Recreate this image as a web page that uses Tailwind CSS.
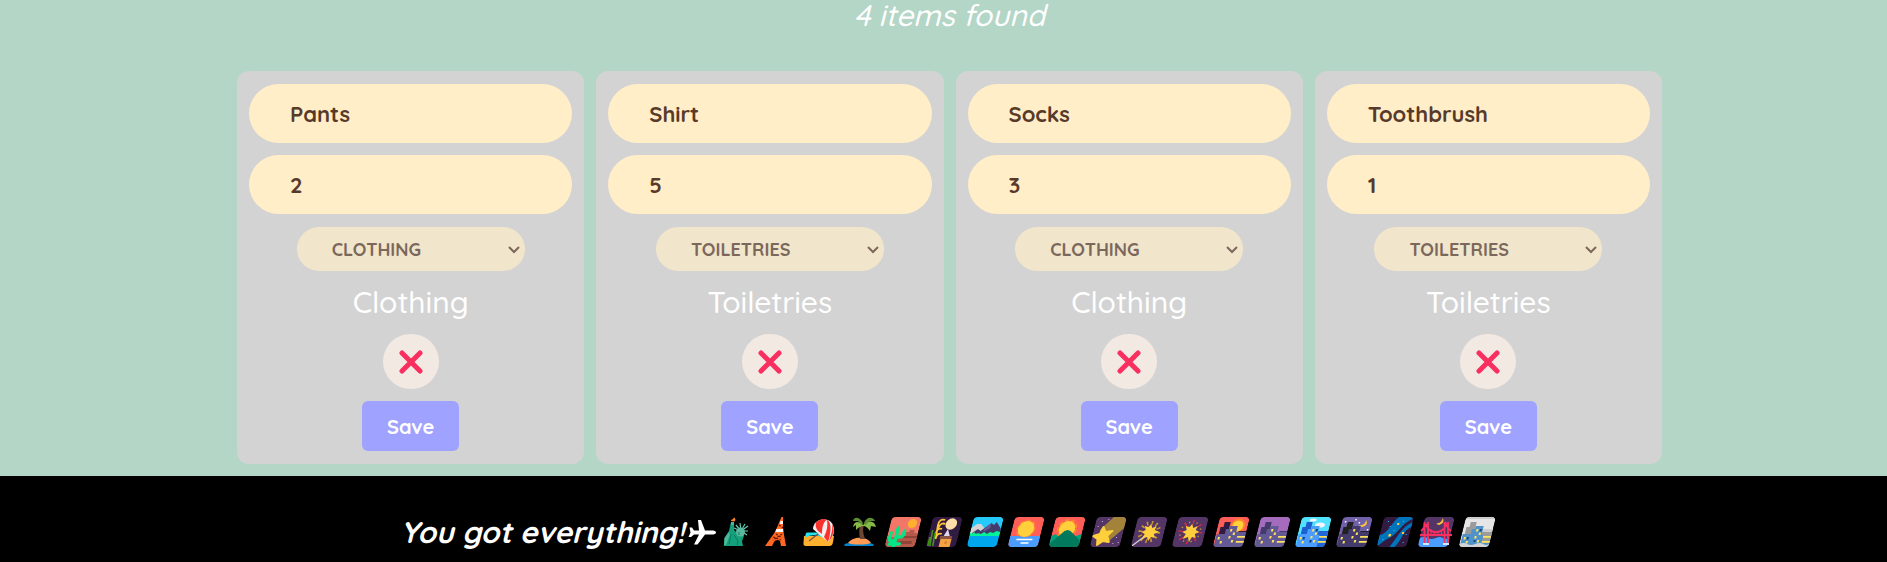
<!DOCTYPE html>
<html lang="en">
<head>
<meta charset="utf-8">
<meta name="viewport" content="width=device-width, initial-scale=1">
<title>Packing list</title>
<script src="https://cdn.jsdelivr.net/npm/@tailwindcss/browser@4"></script>
</head>
<body class="min-h-screen bg-black font-['Quicksand','Lato',sans-serif] text-white">
<!-- Shared shapes for the card buttons and the footer pictures -->
<svg class="absolute h-0 w-0" aria-hidden="true">
  <defs>
    <clipPath id="tile"><rect width="30" height="30" rx="4"/></clipPath>
    <symbol id="cross" viewBox="0 0 24 24"><path d="M3 3 21 21M21 3 3 21" fill="none" stroke="#f92f60" stroke-width="5" stroke-linecap="round"/></symbol>
    <symbol id="chevron" viewBox="0 0 12 8"><path d="m1 1 5 5 5-5" fill="none" stroke="#583a2a" stroke-width="2"/></symbol>
    <g id="towers">
      <path d="M9 30V12h3V9h8v21zM1 17h8v13H1zM20 15h10v15H20z"/>
    </g>
    <g id="windows" fill="#ffe45c">
      <path d="M13.500 12h2v2.500h-2zM17 15.500h2V18h-2zM13.500 19h2v2.500h-2zM17 23h2v2.500h-2zM3 20h2v2.500H3zM6 24h2v2.500H6zM22 19h8v1.800h-8zM22 24h8v1.800h-8z"/>
    </g>
  </defs>
</svg>

<main class="bg-[#b3d6c7] pb-3 pl-3">
  <h2 class="pb-[41px] text-center text-[30px] leading-[30px] font-medium italic">4 items found</h2>
  <ul class="mx-auto grid w-[76%] grid-cols-4 gap-3">
    <li class="flex flex-col items-center gap-3 rounded-xl bg-[#d3d3d3] px-3 py-[13px]">
      <input aria-label="Item name" value="Pants" class="h-[59px] w-full rounded-full bg-[#ffeec8] px-[41px] pt-px text-[22px] font-bold text-[#583a2a]">
      <input aria-label="Quantity" value="2" class="h-[59px] w-full rounded-full bg-[#ffeec8] px-[41px] pt-px text-[22px] font-bold text-[#583a2a]">
      <div class="relative mt-px w-[228px] opacity-70">
        <select aria-label="Category" disabled class="block h-11 w-full appearance-none rounded-full bg-[#ffeec8] pl-[35px] text-[18px] font-bold text-[#583a2a] opacity-100"><option>CLOTHING</option></select>
        <svg class="pointer-events-none absolute top-[19px] right-[5px] h-2 w-3" aria-hidden="true"><use href="#chevron"/></svg>
      </div>
      <p class="text-[30px] leading-[39px] font-medium">Clothing</p>
      <button aria-label="Remove" class="flex h-[55px] w-14 items-center justify-center rounded-full bg-[#f3e9e3]"><svg class="size-6" aria-hidden="true"><use href="#cross"/></svg></button>
      <button class="h-[50px] w-[97px] rounded-md bg-[#9fa3ff] pt-px text-[20px] font-bold">Save</button>
    </li>
    <li class="flex flex-col items-center gap-3 rounded-xl bg-[#d3d3d3] px-3 py-[13px]">
      <input aria-label="Item name" value="Shirt" class="h-[59px] w-full rounded-full bg-[#ffeec8] px-[41px] pt-px text-[22px] font-bold text-[#583a2a]">
      <input aria-label="Quantity" value="5" class="h-[59px] w-full rounded-full bg-[#ffeec8] px-[41px] pt-px text-[22px] font-bold text-[#583a2a]">
      <div class="relative mt-px w-[228px] opacity-70">
        <select aria-label="Category" disabled class="block h-11 w-full appearance-none rounded-full bg-[#ffeec8] pl-[35px] text-[18px] font-bold text-[#583a2a] opacity-100"><option>TOILETRIES</option></select>
        <svg class="pointer-events-none absolute top-[19px] right-[5px] h-2 w-3" aria-hidden="true"><use href="#chevron"/></svg>
      </div>
      <p class="text-[30px] leading-[39px] font-medium">Toiletries</p>
      <button aria-label="Remove" class="flex h-[55px] w-14 items-center justify-center rounded-full bg-[#f3e9e3]"><svg class="size-6" aria-hidden="true"><use href="#cross"/></svg></button>
      <button class="h-[50px] w-[97px] rounded-md bg-[#9fa3ff] pt-px text-[20px] font-bold">Save</button>
    </li>
    <li class="flex flex-col items-center gap-3 rounded-xl bg-[#d3d3d3] px-3 py-[13px]">
      <input aria-label="Item name" value="Socks" class="h-[59px] w-full rounded-full bg-[#ffeec8] px-[41px] pt-px text-[22px] font-bold text-[#583a2a]">
      <input aria-label="Quantity" value="3" class="h-[59px] w-full rounded-full bg-[#ffeec8] px-[41px] pt-px text-[22px] font-bold text-[#583a2a]">
      <div class="relative mt-px w-[228px] opacity-70">
        <select aria-label="Category" disabled class="block h-11 w-full appearance-none rounded-full bg-[#ffeec8] pl-[35px] text-[18px] font-bold text-[#583a2a] opacity-100"><option>CLOTHING</option></select>
        <svg class="pointer-events-none absolute top-[19px] right-[5px] h-2 w-3" aria-hidden="true"><use href="#chevron"/></svg>
      </div>
      <p class="text-[30px] leading-[39px] font-medium">Clothing</p>
      <button aria-label="Remove" class="flex h-[55px] w-14 items-center justify-center rounded-full bg-[#f3e9e3]"><svg class="size-6" aria-hidden="true"><use href="#cross"/></svg></button>
      <button class="h-[50px] w-[97px] rounded-md bg-[#9fa3ff] pt-px text-[20px] font-bold">Save</button>
    </li>
    <li class="flex flex-col items-center gap-3 rounded-xl bg-[#d3d3d3] px-3 py-[13px]">
      <input aria-label="Item name" value="Toothbrush" class="h-[59px] w-full rounded-full bg-[#ffeec8] px-[41px] pt-px text-[22px] font-bold text-[#583a2a]">
      <input aria-label="Quantity" value="1" class="h-[59px] w-full rounded-full bg-[#ffeec8] px-[41px] pt-px text-[22px] font-bold text-[#583a2a]">
      <div class="relative mt-px w-[228px] opacity-70">
        <select aria-label="Category" disabled class="block h-11 w-full appearance-none rounded-full bg-[#ffeec8] pl-[35px] text-[18px] font-bold text-[#583a2a] opacity-100"><option>TOILETRIES</option></select>
        <svg class="pointer-events-none absolute top-[19px] right-[5px] h-2 w-3" aria-hidden="true"><use href="#chevron"/></svg>
      </div>
      <p class="text-[30px] leading-[39px] font-medium">Toiletries</p>
      <button aria-label="Remove" class="flex h-[55px] w-14 items-center justify-center rounded-full bg-[#f3e9e3]"><svg class="size-6" aria-hidden="true"><use href="#cross"/></svg></button>
      <button class="h-[50px] w-[97px] rounded-md bg-[#9fa3ff] pt-px text-[20px] font-bold">Save</button>
    </li>
  </ul>
</main>

<footer class="flex items-center justify-center bg-black pt-9 pb-3 pl-3">
  <p class="text-[30px] leading-[40px] font-bold italic">You got everything!</p>
  <!-- Plane -->
  <svg class="ml-1 h-[30px] w-[31px]" viewBox="0 0 31 30" aria-hidden="true"><path fill="#fff" d="M28 15.500c0-1.500-2-2-4-2h-7L13 3h-3l1 10.500H6L4 10.500H1.500L2.500 15.500 .5 20H3l3-2.500h5L6 27.500h3.500L17 17.500h7c2 0 4-.5 4-2z"/></svg>
  <!-- Statue of Liberty -->
  <svg class="h-[30px] w-[41px]" viewBox="0 0 41 30" aria-hidden="true">
    <path fill="#15a07c" d="M5 29 5.500 21 10 14 12 5h3l0 8 4 4 5-2 1 4-2 5 1 5z"/><path fill="#4db89a" d="M12 5h3v3h-3zM5.500 21 10 15l1 3-4 10H5z"/>
    <path fill="#ff822d" d="M12 4c0-2 2-1 3-3.500C16.500 1 17 3 15.500 4.500z"/>
    <path stroke="#5fcfae" stroke-width="1.200" d="M22 14 15 11M22 14 17 8M22 14 21 6M22 14 26 7M22 14 29 9M22 14 29 14M22 14 28 18"/>
    <circle cx="21.500" cy="15" r="4.500" fill="#5ab89e"/><path stroke="#0b7a5f" fill="none" d="M12 17 10 27M15 18 19 24 18 28M20 15v3"/>
  </svg>
  <!-- Tokyo Tower -->
  <svg class="h-[30px] w-[41px]" viewBox="0 0 41 30" aria-hidden="true">
    <path fill="#ff6723" d="M21.500 0h1.500L23 12 26 29h-5l-1-5c-2-2-5-1-6 1l-2 4H5L15 15z"/>
    <path fill="#f4f4f4" d="M20.500 4h2.500v3h-3.300zM16.500 12h6.700v3h-8z"/>
    <path stroke="#6b1c0d" stroke-width="1.300" stroke-dasharray="2 1.500" fill="none" d="M16 17 22 21M22 17 13 23M13 20l8 3M19 8l4 3"/>
  </svg>
  <!-- Beach with umbrella -->
  <svg class="h-[30px] w-[41px]" viewBox="0 0 41 30" aria-hidden="true">
    <path fill="#ffb02e" d="M3 19h30l-1 6q-.5 4-3.500 4H5q-3 0-2.500-3z"/><path fill="#26e1ee" d="M6 15.500h27l-1 3q-6 4-13 1-7-3-15 1l.5-3q.5-2 1.500-2z"/>
    <path stroke="#8d4b43" stroke-width="1.300" d="M8 24 22 13"/><path fill="#fcecec" d="M12 12C12 3 24-1 30 5c5 6 3 15-3 20z"/>
    <path fill="#f8312f" d="M15 5.500C18 2.500 23 1 26 3c-3 1-5 6-5 14l-4-3C15 11 14 9 15 5.500zM26 3c4 1 5 10 1 22l-4-5C26 14 27 8 26 3zM31 7c3 6 1 13-3 17 2-6 4-11 3-17z"/>
  </svg>
  <!-- Desert island -->
  <svg class="h-[30px] w-[41px]" viewBox="0 0 41 30" aria-hidden="true">
    <path fill="#0084ce" d="M2 28c3-3 5-1 8-2h14c3 1 5-1 8 2l-1 1H3z"/><path fill="#ff9b55" d="M6 26c5-7 19-7 23 0-5 2-19 2-23 0z"/>
    <path fill="#6d4534" d="M18 8h4c-2 6 0 10 1 14h-5c-1-5-1-9 0-14z"/>
    <path fill="#86b947" d="M21 8C16 3 12 5 11 10l3-2 0 5c3-3 5-4 7-4 3 0 5 2 7 5l1-5 5 1c-1-6-8-8-13-2z"/><path fill="#5d8c34" d="M21 6C17-1 12 0 11 4l5 0 4 4zM22 6c3-7 9-6 11-2l-5 0-5 4z"/>
  </svg>
  <!-- Desert -->
  <svg class="h-[30px] w-[41px]" viewBox="0 0 41 30" aria-hidden="true"><g transform="translate(9 0) skewX(-14)"><g clip-path="url(#tile)">
    <path fill="#f37768" d="M0 0h30v30H0z"/><circle cx="22" cy="6.500" r="4.500" fill="#ffb02e"/><path fill="#b5594a" d="M15 19h3v-4h3v-2h5v3h4v14H0v-9z"/><path fill="#8f4439" d="M15 19h15v2H15zM13 24h13v3H13z"/>
    <path fill="none" stroke="#00e586" stroke-width="3.500" stroke-linecap="round" d="M9 30V11M3 16v5q0 3 3 3h3M16 14v3q0 3-3 3h-3M4 27h10"/></g></g></svg>
  <!-- Moon viewing -->
  <svg class="h-[30px] w-[41px]" viewBox="0 0 41 30" aria-hidden="true"><g transform="translate(9 0) skewX(-14)"><g clip-path="url(#tile)">
    <path fill="#321b41" d="M0 0h30v30H0z"/><circle cx="20" cy="7" r="5.700" fill="#ffdea7"/><path fill="none" stroke="#ffc637" stroke-width="1.800" d="M13 3Q7 1 7 8M14 7Q9 5 8 11M12 12Q7 10 7 17M13 17Q8 15 8 22M7 8l1 14"/><path stroke="#44911b" stroke-width="1.600" d="M3 13 4 29M6 16 7 29M2 20v9"/>
    <path fill="#e1d8ec" d="m18 12 4 8h-7z"/><path fill="#8c5543" d="M12 19h12v3H12z"/><path fill="#f3a143" d="M13 22h11v8H13z"/><path fill="#d67d29" d="M18 24h2v3h-2z"/></g></g></svg>
  <!-- National park -->
  <svg class="h-[30px] w-[41px]" viewBox="0 0 41 30" aria-hidden="true"><g transform="translate(9 0) skewX(-14)"><g clip-path="url(#tile)">
    <path fill="#26c9fc" d="M0 0h30v18H0z"/><path fill="#d3d3d3" d="M0 11 5 7h4l6 6-3 4H0z"/><path fill="#433b6b" d="M2 16 7 12l3 2 9-8 3 2 2-3 6 7v6H2z"/><path fill="#635994" d="m13 12 6-6 0 5-6 4z"/>
    <path fill="#00f397" d="M0 20v-4l2 1 2-2 2 2 2-1 3 1 3-2 3 2 3-2 3 1 3-2 4 1v5z"/><path fill="#00a6ed" d="M0 19h30v11H0z"/></g></g></svg>
  <!-- Sunrise over the sea -->
  <svg class="h-[30px] w-[41px]" viewBox="0 0 41 30" aria-hidden="true"><g transform="translate(9 0) skewX(-14)"><g clip-path="url(#tile)">
    <path fill="#ff5e58" d="M0 0h30v30H0z"/><circle cx="14" cy="12" r="8" fill="none" stroke="#ff822d" stroke-width="3" stroke-dasharray="4 2"/><circle cx="14" cy="12" r="8" fill="#ffd03b"/><path fill="#4a9dff" d="M0 19h9q6 2 11 0h10v11H0z"/><path stroke="#fff" stroke-width="1.400" d="M7 22.500h16M12 26h8"/></g></g></svg>
  <!-- Sunrise over mountains -->
  <svg class="h-[30px] w-[41px]" viewBox="0 0 41 30" aria-hidden="true"><g transform="translate(9 0) skewX(-14)"><g clip-path="url(#tile)">
    <path fill="#ff5e58" d="M0 0h30v30H0z"/><circle cx="14" cy="12" r="8.500" fill="none" stroke="#ff822d" stroke-width="3" stroke-dasharray="4 2"/><circle cx="14" cy="12" r="8" fill="#ffd03b"/><path fill="#00a17d" d="M0 19 4 17l8 6 10-3 8-3v13H0z"/><path fill="#00795d" d="M0 27 12 14l3-1 3 1 12 10v6H0z"/></g></g></svg>
  <!-- Shooting star -->
  <svg class="h-[30px] w-[41px]" viewBox="0 0 41 30" aria-hidden="true"><g transform="translate(9 0) skewX(-14)"><g clip-path="url(#tile)">
    <path fill="#533566" d="M0 0h30v30H0z"/><path fill="#a28339" d="M6 13 17 0h13v11L16 26z"/><path fill="#ffd03b" stroke="#ffd03b" stroke-width="2" stroke-linejoin="round" d="m9 10 3 5 7-1-4 5 3 6-6-1-5 4-1-6-5-3 6-2z"/><path fill="#d3b7ec" d="M6 4h1v1H6zM3 9h1v1H3zM24 20h1v1h-1zM27 25h1v1h-1zM22 26h1v1h-1zM12 2h1v1h-1z"/></g></g></svg>
  <!-- Sparkler -->
  <svg class="h-[30px] w-[41px]" viewBox="0 0 41 30" aria-hidden="true"><g transform="translate(9 0) skewX(-14)"><g clip-path="url(#tile)">
    <path fill="#533566" d="M0 0h30v30H0z"/><circle cx="15" cy="15" r="9" fill="none" stroke="#c8962e" stroke-width="4" stroke-dasharray="1.500 3.200"/><path stroke="#d3d3d3" stroke-width="1.600" d="M1 29 14 17"/><path fill="#ffd03b" d="m15 7 2 4 4-2-1 4 5 2-5 2 2 4-4-1-2 4-2-4-5 2 2-5-4-2 4-2-2-4 4 1z"/></g></g></svg>
  <!-- Fireworks -->
  <svg class="h-[30px] w-[41px]" viewBox="0 0 41 30" aria-hidden="true"><g transform="translate(9 0) skewX(-14)"><g clip-path="url(#tile)">
    <path fill="#533566" d="M0 0h30v30H0z"/><circle cx="15" cy="15" r="9.500" fill="none" stroke="#d32f3e" stroke-width="5" stroke-dasharray="1.300 6.150"/><circle cx="15" cy="15" r="10" fill="none" stroke="#c8962e" stroke-width="1.500" stroke-dasharray="1.300 6.550" stroke-dashoffset="4"/><path fill="#ffd03b" d="m15 7 2 4 4-2-1 4 4 2-4 2 2 4-4-1-2 5-2-5-5 2 2-5-4-2 4-2-2-4 4 1z"/></g></g></svg>
  <!-- Sunset -->
  <svg class="h-[30px] w-[41px]" viewBox="0 0 41 30" aria-hidden="true"><g transform="translate(9 0) skewX(-14)"><g clip-path="url(#tile)">
    <path fill="#ff5e58" d="M0 0h30v30H0z"/><circle cx="20" cy="9" r="7.500" fill="#ff822d"/><circle cx="20" cy="9" r="5.500" fill="#ffd03b"/><path fill="#321b41" d="M3 10h3V5h6v25H3zM22 14h8v16h-8z"/><use href="#towers" fill="#635994"/><use href="#windows"/></g></g></svg>
  <!-- Cityscape at dusk -->
  <svg class="h-[30px] w-[41px]" viewBox="0 0 41 30" aria-hidden="true"><g transform="translate(9 0) skewX(-14)"><g clip-path="url(#tile)">
    <path fill="#a56bbd" d="M0 0h30v30H0z"/><path fill="#433b6b" d="M3 10h3V5h6v25H3zM22 14h8v16h-8z"/><use href="#towers" fill="#635994"/><use href="#windows"/></g></g></svg>
  <!-- Cityscape -->
  <svg class="h-[30px] w-[41px]" viewBox="0 0 41 30" aria-hidden="true"><g transform="translate(9 0) skewX(-14)"><g clip-path="url(#tile)">
    <path fill="#50e2ff" d="M0 0h30v30H0z"/><g fill="#f4f4ff"><ellipse cx="12" cy="3" rx="3.500" ry="1.600"/><ellipse cx="20" cy="8" rx="5" ry="2.600"/></g><path fill="#1c5fd0" d="M3 10h3V5h6v25H3zM20 14h10v16H20z"/><use href="#towers" fill="#4a9dff"/><path fill="#2267d8" d="M20 15h10v15h-8V18h-2z"/><use href="#windows"/><path fill="#123a7a" d="M17 12h2v2.500h-2zM13.500 23h2v2.500h-2zM6 20h2v2.500H6z"/></g></g></svg>
  <!-- Night with stars -->
  <svg class="h-[30px] w-[41px]" viewBox="0 0 41 30" aria-hidden="true"><g transform="translate(9 0) skewX(-14)"><g clip-path="url(#tile)">
    <path fill="#7161a8" d="M0 0h30v30H0z"/><path fill="#f9c23c" d="M24 3q4 5-2 7-3 0-4-2 6 1 6-5z"/><path fill="#fff" d="M13 2h1.500v1.500H13zM3 4h1.500v1.500H3zM17 5h1.500v1.500H17zM27 12h1.500v1.500H27z"/><path fill="#212121" d="M3 10h3V5h6v25H3zM21 14h9v16h-9z"/><use href="#towers" fill="#433b6b"/><use href="#windows"/></g></g></svg>
  <!-- Milky Way -->
  <svg class="h-[30px] w-[41px]" viewBox="0 0 41 30" aria-hidden="true"><g transform="translate(9 0) skewX(-14)"><g clip-path="url(#tile)">
    <path fill="#321b41" d="M0 0h30v30H0z"/><path fill="#0074ba" d="M0 18C8 17 9 5 15 0h15v2C18 6 20 17 7 23L0 30zM30 5v5C22 13 24 23 18 30h-5c5-9 7-20 17-25z"/><path fill="#ffd03b" d="M15 6h2v2h-2zM9 17h2.500v2.500H9zM22 15h2v2h-2z"/><path fill="#26c9fc" d="M5 4h1v1H5zM8 9h1v1H8zM20 4h1v1h-1zM26 17h1v1h-1zM25 25h1v1h-1zM4 22h1v1H4zM13 13h1v1h-1z"/></g></g></svg>
  <!-- Bridge at night -->
  <svg class="h-[30px] w-[41px]" viewBox="0 0 41 30" aria-hidden="true"><g transform="translate(9 0) skewX(-14)"><g clip-path="url(#tile)">
    <path fill="#533566" d="M0 0h30v30H0z"/><path fill="#f9c23c" d="M18 1q4 5-2 7-2 0-3-2 5 1 5-5z"/><path fill="#4a9dff" d="M0 21q4-2 8 0t8 0 7 0 7 0v9H0z"/></g></g>
    <path fill="none" stroke="#f92f60" stroke-width="1.800" d="M8.500 27V5M12 27V5M28.500 27V5M32 27V5M4 18h32M5 14Q9 11 10 7q2 8 10 8t10-8q2 5 5 7"/><path stroke="#f92f60" d="M15 12v6M18.500 14v4M22 14v4M25.500 12v6"/><path fill="#d3e9ff" d="M7 26h6v2H7zM27 26h6v2h-6z"/></svg>
  <!-- Foggy -->
  <svg class="h-[30px] w-[41px]" viewBox="0 0 41 30" aria-hidden="true"><g transform="translate(9 0) skewX(-14)"><g clip-path="url(#tile)">
    <path fill="#e6e6e6" d="M0 0h30v30H0z"/><path fill="#cdcdcd" d="M0 0h30v2H0zM14 12h16v3H14z"/><path fill="#9b9b9b" d="M3 10h3V5h6v20H3zM20 15h10v11H20z"/><use href="#towers" fill="#5092ca"/><path fill="#9b9b9b" d="M20 15h10v11h-8v-8h-2z"/><use href="#windows"/><path fill="#1d4a75" d="M17 12h2v2.500h-2zM6 20h2v2.500H6zM13.500 23h2v2h-2z"/><path fill="#d3d3d3" d="M0 27q4-2 8 0t8 0 8 0 6 0v3H0z"/></g></g></svg>
</footer>
</body>
</html>
